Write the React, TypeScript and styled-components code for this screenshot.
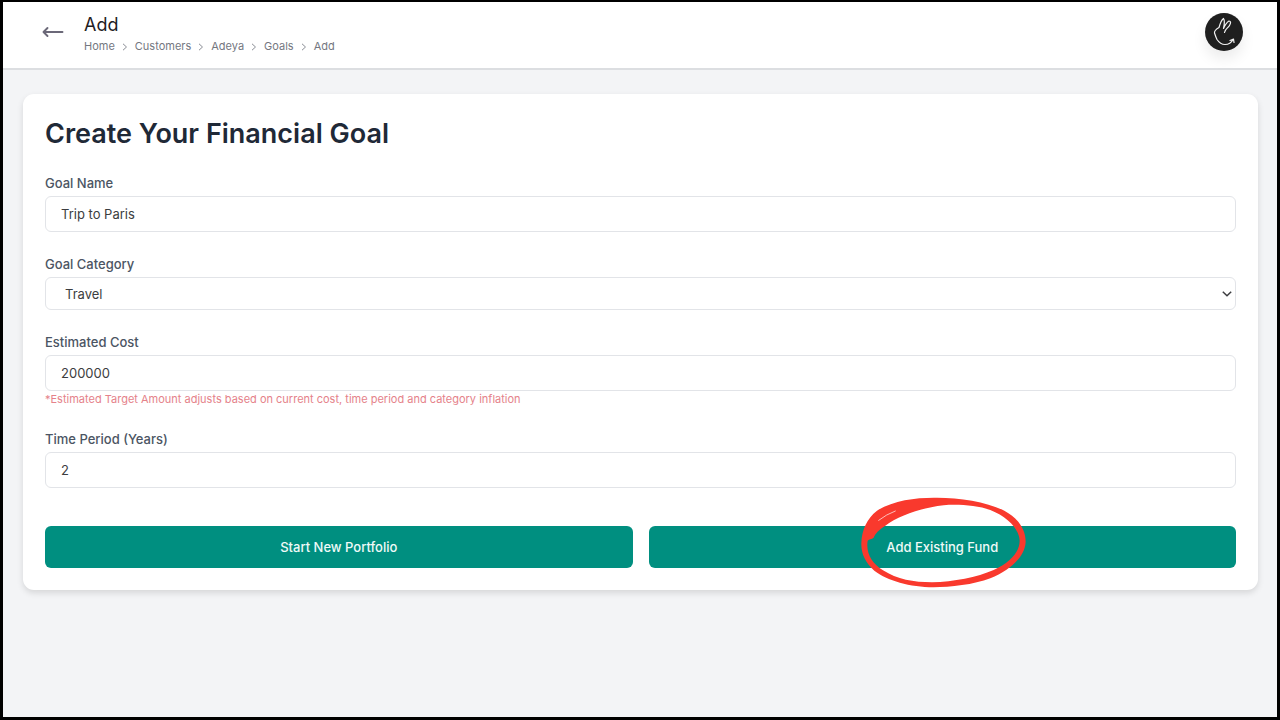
import React from "react";
import styled, { createGlobalStyle } from "styled-components";

const GlobalStyle = createGlobalStyle`
  *, *::before, *::after { box-sizing: border-box; }
  body {
    margin: 0;
    background: #f3f4f6;
    font-family: Inter, "Liberation Sans", sans-serif;
    color: #374151;
  }
  button, input, select { font: inherit; }
`;

const Page = styled.div`
  display: flex;
  flex-direction: column;
  min-height: 100vh;
  background: #f3f4f6;
  border: solid #000;
  border-width: 2px 3px 3px;
`;

const TopBar = styled.header`
  display: flex;
  align-items: center;
  gap: 20px;
  padding: 8px 34px 14px 39px;
  background: #fff;
  border-bottom: 2px solid #dcdee1;
`;

const BackButton = styled.button`
  display: flex;
  padding: 0;
  border: 0;
  background: none;
  color: #6b6878;
`;

const TitleBlock = styled.div`
  flex: 1;
`;

const PageTitle = styled.h1`
  margin: 0;
  font-size: 18px;
  line-height: 29px;
  font-weight: 400;
  color: #1f2023;
`;

const Crumbs = styled.nav`
  display: flex;
  align-items: center;
  gap: 6px;
  font-size: 11px;
  line-height: 15px;
  color: #74777f;
`;

const Crumb = styled.a`
  color: inherit;
  text-decoration: none;
`;

const Avatar = styled.button`
  display: flex;
  padding: 0;
  border: 0;
  border-radius: 50%;
  background: #1f1f1f;
  box-shadow: 0 8px 14px rgba(0, 0, 0, 0.08);
`;

const Main = styled.main`
  padding: 24px 19px 24px 20px;
`;

const Card = styled.form`
  padding: 22px;
  border-radius: 11px;
  background: #fff;
  box-shadow: 0 3px 6px rgba(0, 0, 0, 0.12);
`;

const Heading = styled.h2`
  margin: 0 0 21px;
  font-size: 27px;
  line-height: 36px;
  font-weight: 600;
  color: #1f2937;
`;

const Field = styled.div`
  display: flex;
  flex-direction: column;
  margin-bottom: 22px;
`;

const Label = styled.label`
  margin-bottom: 3px;
  font-size: 13px;
  line-height: 20px;
  font-weight: 500;
  color: #4b5563;
`;

const TextInput = styled.input`
  width: 100%;
  height: 36px;
  padding: 0 15px;
  border: 1px solid #e2e4e8;
  border-radius: 6px;
  background: #fff;
  font-size: 13px;
  color: #3c3d40;
`;

const SelectWrap = styled.div`
  display: grid;
  align-items: center;

  > * { grid-area: 1 / 1; }
  > svg { justify-self: end; margin-right: 3px; pointer-events: none; }
`;

const Select = styled.select`
  appearance: none;
  width: 100%;
  height: 33px;
  padding: 0 19px;
  border: 1px solid #e2e4e8;
  border-radius: 6px;
  background: #fff;
  font-size: 13px;
  color: #3c3d40;
`;

const Hint = styled.p`
  margin: 0;
  font-size: 11px;
  line-height: 16px;
  color: #e5828a;
`;

const Actions = styled.div`
  display: grid;
  grid-template-columns: 1fr 1fr;
  gap: 16px;
  margin-top: 38px;
`;

const ActionButton = styled.button`
  position: relative;
  height: 42px;
  border: 0;
  border-radius: 6px;
  background: #008f80;
  font-size: 13px;
  font-weight: 500;
  color: #effaf8;
`;

const Scribble = styled.svg`
  position: absolute;
  top: 50%;
  left: 50%;
  transform: translate(-50%, -50%);
  pointer-events: none;
`;

const crumbs = ["Home", "Customers", "Adeya", "Goals", "Add"];

const Chevron = () => (
  <svg width="8" height="10" viewBox="0 0 8 10" fill="none" stroke="#8b8e96" strokeWidth="1" aria-hidden="true">
    <path d="M2 1.8 5.5 5 2 8.2" />
  </svg>
);

export default function App() {
  return (
    <>
      <GlobalStyle />
      <Page>
        <TopBar>
          <BackButton type="button" aria-label="Back">
            <svg width="22" height="14" viewBox="0 0 22 14" fill="none" stroke="currentColor" strokeWidth="1.9" strokeLinecap="round" strokeLinejoin="round">
              <path d="M20.500 7H2M5.500 3 1.500 7l4 4" />
            </svg>
          </BackButton>
          <TitleBlock>
            <PageTitle>Add</PageTitle>
            <Crumbs aria-label="Breadcrumb">
              {crumbs.map((name, i) => (
                <React.Fragment key={name}>
                  {i > 0 && <Chevron />}
                  <Crumb href="#">{name}</Crumb>
                </React.Fragment>
              ))}
            </Crumbs>
          </TitleBlock>
          <Avatar type="button" aria-label="Account">
            <svg width="38" height="38" viewBox="0 0 38 38" fill="none" stroke="#f2f2f2" strokeWidth="1.200" strokeLinecap="round" strokeLinejoin="round">
              <path d="M14 14.500C15 11 16.500 7 18.500 5.500C20 7.500 19.500 11 18.500 15.500C20 12 21.500 9.500 24 8C26 8 26 10 24.500 12.500C23 15 20 16 19.500 19.500M14 14.500C11.500 16 9 17.500 9.500 20C10.500 23 11 24.500 12 26.500C14 29.500 16 31.500 20 31.500C24 31.500 26.500 29.500 28 26.500M25 27.500L28.500 26L29 29.500" />
            </svg>
          </Avatar>
        </TopBar>
        <Main>
          <Card onSubmit={(e) => e.preventDefault()}>
            <Heading>Create Your Financial Goal</Heading>
            <Field>
              <Label htmlFor="goal-name">Goal Name</Label>
              <TextInput id="goal-name" defaultValue="Trip to Paris" />
            </Field>
            <Field>
              <Label htmlFor="goal-category">Goal Category</Label>
              <SelectWrap>
                <Select id="goal-category" defaultValue="Travel">
                  <option>Travel</option>
                </Select>
                <svg width="12" height="8" viewBox="0 0 12 8" fill="none" stroke="#3c3d40" strokeWidth="1.500" aria-hidden="true">
                  <path d="M1.800 1.800 6 5.800l4.200-4" />
                </svg>
              </SelectWrap>
            </Field>
            <Field>
              <Label htmlFor="cost">Estimated Cost</Label>
              <TextInput id="cost" inputMode="numeric" defaultValue="200000" aria-describedby="cost-hint" />
              <Hint id="cost-hint">*Estimated Target Amount adjusts based on current cost, time period and category inflation</Hint>
            </Field>
            <Field>
              <Label htmlFor="period">Time Period (Years)</Label>
              <TextInput id="period" inputMode="numeric" defaultValue="2" />
            </Field>
            <Actions>
              <ActionButton type="button">Start New Portfolio</ActionButton>
              <ActionButton type="button">
                Add Existing Fund
                <Scribble width="180" height="110" viewBox="35 36 540 330" aria-hidden="true">
                  <path
                    fill="#f9392d"
                    fillRule="evenodd"
                    d="M63 190C64 150 80 115 110 92C160 60 230 52 290 53C360 53 440 66 492 92C535 115 556 150 556 185C554 230 510 270 450 295C400 314 330 322 280 322C210 321 140 302 102 272C75 248 62 220 63 190ZM82 182C76 220 95 250 128 271C170 298 220 307 275 307C340 305 410 292 460 270C510 247 538 215 538 182C536 145 500 110 450 90C410 76 350 72 310 76C240 84 175 107 134 138C114 151 106 160 100 173C94 178 86 176 82 182Z"
                  />
                  <path d="M115 121Q138 103 165 93" fill="none" stroke="#fff" strokeWidth="2" strokeLinecap="round" />
                </Scribble>
              </ActionButton>
            </Actions>
          </Card>
        </Main>
      </Page>
    </>
  );
}
